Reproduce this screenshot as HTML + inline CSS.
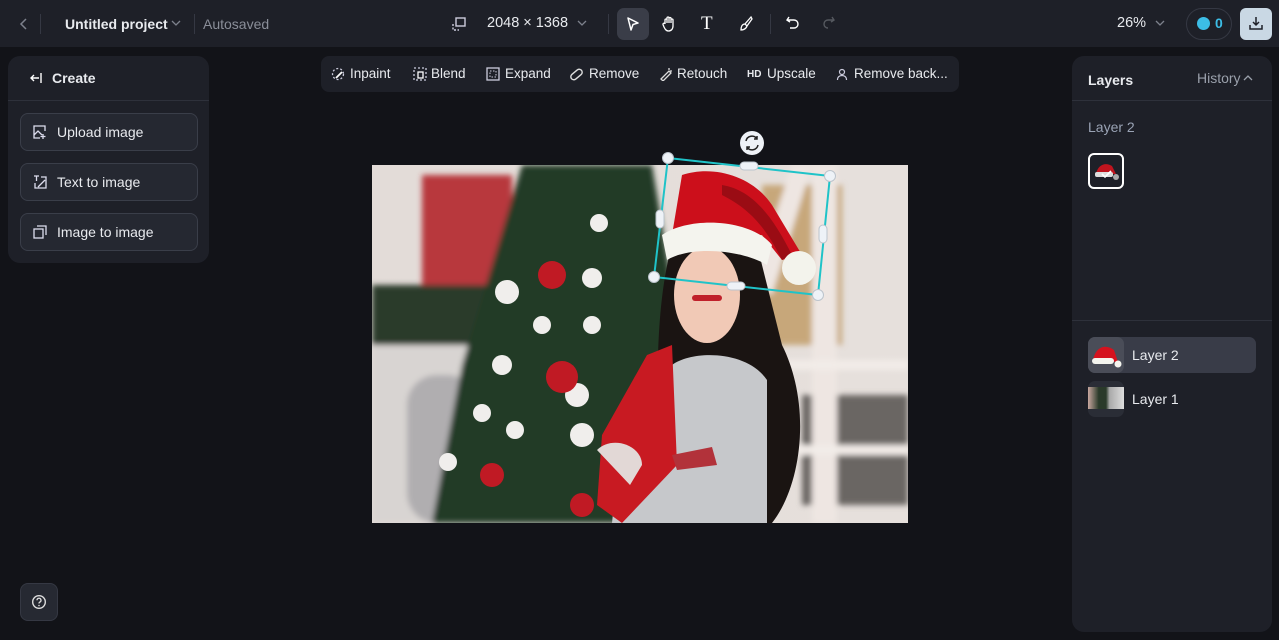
<!DOCTYPE html>
<html><head><meta charset="utf-8"><style>
*{box-sizing:border-box;margin:0;padding:0}
body{width:1279px;height:640px;background:#121318;font-family:"Liberation Sans",sans-serif;color:#e8eaee;position:relative;overflow:hidden;font-size:14px}
.top{position:absolute;left:0;top:0;width:1279px;height:47px;background:#1e2028}
.a{position:absolute}
.panel{position:absolute;background:#1e2028;border-radius:12px}
.btn{position:absolute;left:12px;width:178px;height:38px;border:1px solid #3a3e49;border-radius:8px;background:#252831;font-size:14px;display:flex;align-items:center;padding-left:36px}
.tb span{position:absolute;top:66px;font-size:13.5px}
svg{display:block}
</style></head><body>
<div class="top"></div>
<svg class="a" style="left:18px;top:16px" width="12" height="16"><path d="M8 3 L3 8 L8 13" stroke="#7d818c" stroke-width="1.5" fill="none"/></svg>
<div class="a" style="left:40px;top:14px;width:1px;height:20px;background:#353843"></div>
<div class="a" style="left:65px;top:16px;font-size:14px;font-weight:bold;color:#e8eaee">Untitled project</div>
<svg class="a" style="left:170px;top:17px" width="12" height="12"><path d="M2 4 L6 8 L10 4" stroke="#7d818c" stroke-width="1.3" fill="none"/></svg>
<div class="a" style="left:194px;top:14px;width:1px;height:20px;background:#353843"></div>
<div class="a" style="left:203px;top:16px;font-size:14px;color:#8a8e99">Autosaved</div>
<svg class="a" style="left:451px;top:16px" width="16" height="16"><rect x="5" y="2" width="9" height="8" fill="none" stroke="#ccd" stroke-width="1.4"/><path d="M2 8v6h6" stroke="#ccd" stroke-dasharray="2 1.5" fill="none" stroke-width="1.4"/></svg>
<div class="a" style="left:487px;top:15px;font-size:14.5px">2048 × 1368</div>
<svg class="a" style="left:576px;top:17px" width="12" height="12"><path d="M2 4 L6 8 L10 4" stroke="#7d818c" stroke-width="1.3" fill="none"/></svg>
<div class="a" style="left:608px;top:14px;width:1px;height:20px;background:#353843"></div>
<div class="a" style="left:617px;top:8px;width:32px;height:32px;border-radius:7px;background:#3a3d48"></div>
<svg class="a" style="left:625px;top:16px" width="16" height="16"><path d="M3 2 L13 7 L8 8.5 L6 14 Z" fill="none" stroke="#fff" stroke-width="1.5" stroke-linejoin="round"/></svg>
<svg class="a" style="left:661px;top:15px" width="16" height="17"><path d="M4 9V5a1 1 0 0 1 2 0v3V3a1 1 0 0 1 2 0v5V3.5a1 1 0 0 1 2 0V8V5a1 1 0 0 1 2 0v6c0 3-2 5-4.5 5S4 14 3 12L2 9.5a1 1 0 0 1 2-.5z" fill="none" stroke="#fff" stroke-width="1.3"/></svg>
<div class="a" style="left:701px;top:13px;font-family:'Liberation Serif',serif;font-size:19px;color:#fff">T</div>
<svg class="a" style="left:738px;top:15px" width="16" height="17"><path d="M13 2 L7 9 L9 11 L14 4Z M7 9c-3 0-4 3-4 6 2 0 5-1 6-4" fill="none" stroke="#fff" stroke-width="1.3"/></svg>
<div class="a" style="left:770px;top:14px;width:1px;height:20px;background:#353843"></div>
<svg class="a" style="left:785px;top:15px" width="16" height="16"><path d="M4 2 L2 5 L5 7 M2.5 5H9a4 4 0 0 1 0 8H5" fill="none" stroke="#fff" stroke-width="1.4"/></svg>
<svg class="a" style="left:820px;top:15px" width="16" height="16"><path d="M12 2 L14 5 L11 7 M13.5 5H8a4 4 0 0 0 0 8" fill="none" stroke="#55585f" stroke-width="1.4"/></svg>
<div class="a" style="left:1117px;top:15px;font-size:14.5px">26%</div>
<svg class="a" style="left:1154px;top:17px" width="12" height="12"><path d="M2 4 L6 8 L10 4" stroke="#7d818c" stroke-width="1.3" fill="none"/></svg>
<div class="a" style="left:1186px;top:8px;width:46px;height:32px;border:1px solid #353843;border-radius:16px"></div>
<div class="a" style="left:1197px;top:17px;width:13px;height:13px;border-radius:50%;background:#3cbde6"></div>
<div class="a" style="left:1215px;top:15px;font-size:14px;color:#3cbde6;font-weight:bold">0</div>
<div class="a" style="left:1240px;top:8px;width:32px;height:32px;border-radius:6px;background:#c9d8e4"></div>
<svg class="a" style="left:1248px;top:15px" width="16" height="16"><path d="M8 2v8 M5 7l3 3 3-3 M2 10v4h12v-4" fill="none" stroke="#1e2028" stroke-width="1.5"/></svg>

<div class="panel" style="left:8px;top:56px;width:201px;height:207px">
 <div style="position:absolute;left:0;top:44px;width:201px;height:1px;background:#2e313b"></div>
 <svg class="a" style="left:20px;top:14px" width="16" height="16"><path d="M3 8h8 M6 5L3 8l3 3 M13 3v10" fill="none" stroke="#fff" stroke-width="1.4"/></svg>
 <div class="a" style="left:44px;top:14px;font-weight:bold;font-size:14px">Create</div>
 <div class="btn" style="top:57px">Upload image</div>
 <div class="btn" style="top:107px">Text to image</div>
 <div class="btn" style="top:157px">Image to image</div>
 <svg class="a" style="left:24px;top:68px" width="16" height="16"><path d="M13 7V2H2v12h6 M2 11l4-4 4 4 M11 10v5 M8.5 12.5h5" fill="none" stroke="#dde" stroke-width="1.3"/></svg>
 <svg class="a" style="left:24px;top:118px" width="16" height="16"><path d="M2 2h5 M4.5 2v5 M9 3h5v11H3v-5 M6 13l7-7" fill="none" stroke="#dde" stroke-width="1.3"/></svg>
 <svg class="a" style="left:24px;top:168px" width="16" height="16"><rect x="2" y="5" width="9" height="9" fill="none" stroke="#dde" stroke-width="1.3"/><path d="M5 2h9v9" fill="none" stroke="#dde" stroke-width="1.3"/></svg>
</div>

<div class="panel tb" style="left:321px;top:56px;width:638px;height:36px;border-radius:8px;position:absolute">
</div>
<div class="tb">
 <svg class="a" style="left:331px;top:67px" width="14" height="14"><circle cx="7" cy="7" r="5.5" fill="none" stroke="#ccd" stroke-dasharray="2 2" stroke-width="1.3"/><path d="M5 11l6-6" stroke="#fff" stroke-width="1.8"/></svg><span style="left:350px">Inpaint</span>
 <svg class="a" style="left:413px;top:67px" width="14" height="14"><rect x="1" y="1" width="12" height="12" fill="none" stroke="#ccd" stroke-dasharray="2 2" stroke-width="1.3"/><rect x="5" y="5" width="5" height="6" fill="none" stroke="#fff" stroke-width="1.3"/></svg><span style="left:431px">Blend</span>
 <svg class="a" style="left:486px;top:67px" width="14" height="14"><rect x="1" y="1" width="12" height="12" fill="none" stroke="#ccd" stroke-width="1.3"/><rect x="4" y="4" width="6" height="6" fill="none" stroke="#ccd" stroke-dasharray="1.5 1.5" stroke-width="1"/></svg><span style="left:505px">Expand</span>
 <svg class="a" style="left:569px;top:67px" width="15" height="15"><rect x="1" y="4.5" width="13" height="6" rx="3" transform="rotate(-40 7.5 7.5)" fill="none" stroke="#ddd" stroke-width="1.4"/></svg><span style="left:589px">Remove</span>
 <svg class="a" style="left:659px;top:67px" width="14" height="14"><path d="M2 12l8-8 2 2-8 8z M10 1v2 M13 4h-2" fill="none" stroke="#ddd" stroke-width="1.3"/></svg><span style="left:677px">Retouch</span>
 <span style="left:747px;font-size:10px;font-weight:bold;top:69px">HD</span><span style="left:767px">Upscale</span>
 <svg class="a" style="left:835px;top:67px" width="14" height="14"><circle cx="7" cy="5" r="2.5" fill="none" stroke="#ccd" stroke-width="1.2"/><path d="M2.5 13c0-3 2-4.5 4.5-4.5s4.5 1.5 4.5 4.5" fill="none" stroke="#ccd" stroke-width="1.2"/></svg><span style="left:854px">Remove back...</span>
</div>

<svg class="a" style="left:372px;top:165px" width="536" height="358" viewBox="0 0 536 358">
 <defs>
  <filter id="b"><feGaussianBlur stdDeviation="3"/></filter>
  <linearGradient id="bg" x1="0" x2="1"><stop offset="0" stop-color="#e3dcd8"/><stop offset="1" stop-color="#e6e0dc"/></linearGradient>
 </defs>
 <rect width="536" height="358" fill="url(#bg)"/>
 <g filter="url(#b)">
  <rect x="50" y="10" width="90" height="110" fill="#b8383d"/>
  <rect x="0" y="120" width="140" height="60" fill="#2a3a2a"/>
  <rect x="0" y="180" width="130" height="178" fill="#d8d4d2"/>
  <rect x="35" y="210" width="70" height="148" fill="#b0aeb0" rx="30"/>
  <path d="M150 0 L280 0 L300 120 L290 358 L60 358 L90 200 Z" fill="#233a28"/>
  <rect x="390" y="20" width="80" height="160" fill="#c7a77a"/>
  <rect x="430" y="230" width="106" height="110" fill="#6a6664"/>
  <rect x="440" y="0" width="25" height="358" fill="#eee6e2"/>
  <path d="M380 120 L420 0 L440 0 L400 130Z" fill="#eee6e2"/>
  <rect x="370" y="280" width="166" height="10" fill="#f2ece8"/>
  <rect x="385" y="195" width="151" height="10" fill="#f2ece8"/>
 </g>
 <g fill="#f0eeec"><circle cx="135" cy="127" r="12"/><circle cx="220" cy="113" r="10"/><circle cx="130" cy="200" r="10"/><circle cx="205" cy="230" r="12"/><circle cx="143" cy="265" r="9"/><circle cx="210" cy="270" r="12"/><circle cx="185" cy="210" r="9"/><circle cx="170" cy="160" r="9"/><circle cx="227" cy="58" r="9"/><circle cx="220" cy="160" r="9"/><circle cx="76" cy="297" r="9"/><circle cx="110" cy="248" r="9"/></g>
 <g fill="#c01a24"><circle cx="180" cy="110" r="14"/><circle cx="190" cy="212" r="16"/><circle cx="120" cy="310" r="12"/><circle cx="210" cy="340" r="12"/></g>
 <path d="M300 80 C280 150 285 260 290 358 L400 358 C430 320 440 240 410 180 L385 80 Z" fill="#1a1412"/>
 <ellipse cx="335" cy="130" rx="33" ry="48" fill="#f1c9b6"/>
 <path d="M300 200 C320 185 375 185 395 215 L395 358 L240 358 L250 260 C260 230 270 210 300 200 Z" fill="#c6c8cb"/>
 <path d="M275 190 L300 180 L305 300 L250 358 L225 340 L230 270 Z" fill="#c81a22"/>
 <path d="M225 285 C240 270 270 280 270 300 L258 320 Z" fill="#e2d8d6"/>
 <path d="M300 290 L340 282 L345 300 L305 305Z" fill="#b2323a"/>
 <rect x="320" y="130" width="30" height="6" rx="3" fill="#c0202a"/>
 <path d="M310 10 C340 0 380 10 400 40 L430 90 L410 95 L390 70 L300 70 Z" fill="#cc0f1b"/>
 <path d="M350 20 C380 25 400 50 420 90 L410 95 C395 65 380 45 350 30Z" fill="#9a0c14"/>
 <path d="M290 70 C320 50 380 55 400 80 L395 100 C370 85 320 80 295 95 Z" fill="#f4f4ee"/>
 <circle cx="427" cy="103" r="17" fill="#f3f3ec"/>
</svg>
<svg class="a" style="left:640px;top:125px" width="200" height="180" viewBox="640 125 200 180">
 <path d="M668 158 L830 176 L818 295 L654 277 Z" fill="none" stroke="#1fc3c8" stroke-width="2"/>
 <g fill="#eef2f7" stroke="#bcc4cc"><circle cx="668" cy="158" r="5.5"/><circle cx="830" cy="176" r="5.5"/><circle cx="818" cy="295" r="5.5"/><circle cx="654" cy="277" r="5.5"/>
 <rect x="740" y="162" width="18" height="8" rx="4"/><rect x="727" y="282" width="18" height="8" rx="4"/><rect x="656" y="210" width="8" height="18" rx="4"/><rect x="819" y="225" width="8" height="18" rx="4"/></g>
 <circle cx="752" cy="143" r="12" fill="#eef2f7"/>
 <path d="M746 141a6 6 0 0 1 11-2 M758 145a6 6 0 0 1-11 2 M757 136v3h-3 M747 150v-3h3" fill="none" stroke="#222" stroke-width="1.5"/>
</svg>

<div class="panel" style="left:1072px;top:56px;width:200px;height:576px">
 <div class="a" style="left:16px;top:16px;font-weight:bold;font-size:14px">Layers</div>
 <div class="a" style="left:125px;top:14px;font-size:14px;color:#9aa0ab">History</div>
 <svg class="a" style="left:170px;top:16px" width="12" height="12"><path d="M2 8 L6 4 L10 8" stroke="#9aa0ab" stroke-width="1.3" fill="none"/></svg>
 <div style="position:absolute;left:0;top:44px;width:200px;height:1px;background:#2e313b"></div>
 <div class="a" style="left:16px;top:63px;font-size:14px;color:#9aa3b5">Layer 2</div>
 <div class="a" style="left:16px;top:97px;width:36px;height:36px;border:2px solid #fff;border-radius:6px;background:#1e2028"></div>
 <svg class="a" style="left:20px;top:102px" width="28" height="26"><path d="M4 16 C6 6 14 4 20 8 L24 16Z" fill="#c0141e"/><rect x="3" y="14" width="18" height="5" rx="2" fill="#ddd"/><circle cx="24" cy="19" r="3" fill="#aaa"/><path d="M10 16l3 3 6-6" stroke="#fff" stroke-width="1.6" fill="none"/></svg>
 <div style="position:absolute;left:0;top:264px;width:200px;height:1px;background:#2e313b"></div>
 <div class="a" style="left:16px;top:281px;width:168px;height:36px;border-radius:7px;background:#393c48"></div>
 <div class="a" style="left:16px;top:281px;width:36px;height:36px;border-radius:7px;background:#4a4d58"></div>
 <svg class="a" style="left:18px;top:284px" width="32" height="30"><path d="M3 20 C6 6 16 4 24 10 L28 22Z" fill="#d5121e"/><rect x="2" y="18" width="22" height="6" rx="3" fill="#f4f4ee"/><circle cx="28" cy="24" r="3.5" fill="#f4f4ee"/></svg>
 <div class="a" style="left:60px;top:291px;font-size:14px">Layer 2</div>
 <div class="a" style="left:16px;top:325px;width:36px;height:36px;border-radius:7px;background:#2a2d36;overflow:hidden"><div style="margin-top:6px;height:22px;background:linear-gradient(90deg,#c9a8a0 0,#2a3a2a 30%,#2a3a2a 50%,#aaa 60%,#ddd 100%)"></div></div>
 <div class="a" style="left:60px;top:335px;font-size:14px">Layer 1</div>
</div>

<div class="a" style="left:20px;top:583px;width:38px;height:38px;border-radius:8px;background:#262932;border:1px solid #353843"></div>
<svg class="a" style="left:31px;top:594px" width="16" height="16"><circle cx="8" cy="8" r="6.3" fill="none" stroke="#ddd" stroke-width="1.4"/><path d="M6 6.3a2 2 0 1 1 2.8 1.8c-.6.3-.8.7-.8 1.4" fill="none" stroke="#ddd" stroke-width="1.3"/><circle cx="8" cy="11.5" r=".8" fill="#ddd"/></svg>
</body></html>
